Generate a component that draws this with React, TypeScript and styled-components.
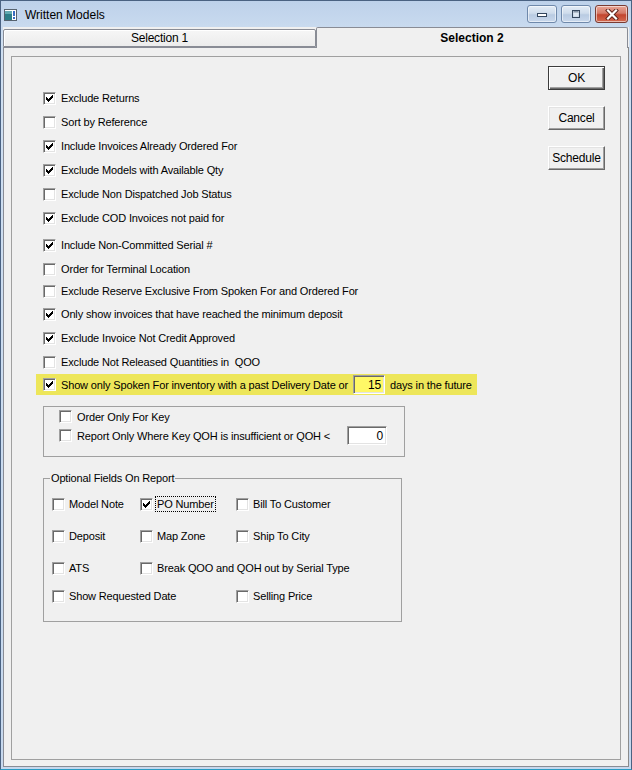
import React from "react";
import styled, { createGlobalStyle, css } from "styled-components";

const GlobalStyle = createGlobalStyle`
  html, body {
    margin: 0;
    padding: 0;
    background: #f0f0f0;
  }
  body {
    font-family: "Liberation Sans", Arial, sans-serif;
    font-size: 11px;
    letter-spacing: -0.15px;
    color: #000;
  }
`;

const WindowStyled = styled.div`
  box-sizing: border-box;
  width: 632px;
  height: 770px;
  display: flex;
  flex-direction: column;
  border: 1px solid #4a6282;
  border-bottom-color: #2a9cc4;
  padding: 0 2px 2px 2px;
  background: linear-gradient(#bdd1ea, #cfdff1 40px, #c6d8ee);
`;

const TitleBarStyled = styled.div`
  display: flex;
  align-items: flex-start;
  height: 26px;
  flex-shrink: 0;
`;

const TitleIconStyled = styled.div`
  display: flex;
  margin: 8px 0 0 1px;
`;

const TitleTextStyled = styled.div`
  font-size: 12px;
  letter-spacing: 0;
  line-height: 14px;
  margin: 7px 0 0 8px;
  color: #000;
`;

const CaptionButtonsStyled = styled.div`
  display: flex;
  gap: 4px;
  margin: 4px 1px 0 auto;
`;

const CaptionButtonStyled = styled.div<{ $close?: boolean }>`
  box-sizing: border-box;
  width: ${(p) => (p.$close ? 33 : 30)}px;
  height: 18px;
  display: flex;
  align-items: center;
  justify-content: center;
  border: 1px solid ${(p) => (p.$close ? "#7a3b32" : "#6f89ab")};
  border-radius: 3px;
  background: ${(p) =>
    p.$close
      ? "linear-gradient(#e9a596, #d47a68 45%, #c2452f 55%, #d46a50)"
      : "linear-gradient(#e3ecf6, #cfdcec 45%, #b9cbe2 55%, #c9d8ec)"};
  box-shadow: inset 0 0 0 1px rgba(255, 255, 255, 0.55);
`;

const ClientStyled = styled.div`
  flex: 1;
  display: flex;
  flex-direction: column;
  background: #f0f0f0;
  min-height: 0;
`;

const TabStripStyled = styled.div`
  display: flex;
  align-items: flex-end;
  height: 20px;
  flex-shrink: 0;
  position: relative;
  z-index: 1;
`;

const TabStyled = styled.div<{ $active?: boolean }>`
  box-sizing: border-box;
  display: flex;
  align-items: center;
  justify-content: center;
  border: 1px solid #898c95;
  border-radius: 2px 2px 0 0;
  ${(p) =>
    p.$active
      ? css`
          width: 312px;
          height: 21px;
          margin-bottom: -1px;
          border-bottom: none;
          background: #f0f0f0;
          font-weight: bold;
          font-size: 12px;
          letter-spacing: 0;
          padding-bottom: 1px;
        `
      : css`
          width: 313px;
          height: 18px;
          background: linear-gradient(#f6f6f6, #ececec);
          box-shadow: inset 1px 1px 0 #fff;
          font-size: 12px;
          letter-spacing: -0.2px;
        `}
`;

const TabPageStyled = styled.div`
  flex: 1;
  display: flex;
  box-sizing: border-box;
  border: 1px solid #898c95;
  border-right-color: #8a8a8a;
  padding: 8px 7px 6px 7px;
  min-height: 0;
`;

const FrameStyled = styled.div`
  flex: 1;
  display: flex;
  border: 1px solid #a0a0a0;
`;

const OptionsColumnStyled = styled.div`
  flex: 1;
  display: flex;
  flex-direction: column;
  align-items: flex-start;
  padding: 30px 0 0 31px;
`;

const ButtonsColumnStyled = styled.div`
  display: flex;
  flex-direction: column;
  gap: 16px;
  padding: 9px 15px 0 0;
`;

const ButtonStyled = styled.button<{ $default?: boolean }>`
  box-sizing: border-box;
  width: 57px;
  height: 24px;
  padding: 0;
  font: inherit;
  font-size: 12px;
  letter-spacing: -0.2px;
  color: #000;
  background: #f0f0f0;
  border: 1px solid;
  border-color: #fff #696969 #696969 #fff;
  box-shadow: inset -1px -1px 0 #a0a0a0, inset 1px 1px 0 #e3e3e3;
  ${(p) =>
    p.$default &&
    css`
      border-color: #3c3c3c;
      box-shadow: inset 1px 1px 0 #fff, inset -1px -1px 0 #696969,
        inset -2px -2px 0 #a0a0a0;
    `}
`;

const RowStyled = styled.div<{ $gap?: number }>`
  display: flex;
  align-items: center;
  gap: 5px;
  height: 22px;
  margin-top: ${(p) => p.$gap ?? 0}px;
  white-space: nowrap;
`;

const HighlightRowStyled = styled(RowStyled)`
  height: 21px;
  margin-left: -7px;
  padding: 0 5px 0 7px;
  background: #ede65a;
`;

const BoxStyled = styled.span`
  box-sizing: border-box;
  width: 13px;
  height: 13px;
  flex-shrink: 0;
  display: inline-flex;
  background: #fff;
  border: 1px solid;
  border-color: #a0a0a0 #fff #fff #a0a0a0;
  box-shadow: inset 1px 1px 0 #696969, inset -1px -1px 0 #e3e3e3;
  position: relative;
`;

const CheckMarkStyled = styled.svg`
  position: absolute;
  left: -1px;
  top: -1px;
`;

const LabelStyled = styled.span<{ $focused?: boolean }>`
  line-height: 14px;
  ${(p) =>
    p.$focused &&
    css`
      outline: 1px dotted #000;
      padding: 0 1px;
      margin-left: -1px;
    `}
`;

const NumberInputStyled = styled.div<{ $width: number; $bg?: string }>`
  box-sizing: border-box;
  width: ${(p) => p.$width}px;
  height: 19px;
  display: flex;
  align-items: center;
  justify-content: flex-end;
  padding-right: 3px;
  background: ${(p) => p.$bg ?? "#fff"};
  border: 1px solid;
  border-color: #a0a0a0 #fff #fff #a0a0a0;
  box-shadow: inset 1px 1px 0 #696969, inset -1px -1px 0 #e3e3e3;
  font-size: 12px;
`;

const KeyGroupStyled = styled.div`
  box-sizing: border-box;
  width: 362px;
  margin-top: 11px;
  padding: 0 17px 11px 15px;
  border: 1px solid #a0a0a0;
  display: flex;
  flex-direction: column;
`;

const KeyRowStyled = styled(RowStyled)`
  height: 19px;
`;

const PushRightStyled = styled.div`
  margin-left: auto;
`;

const FieldsetStyled = styled.fieldset`
  box-sizing: border-box;
  width: 359px;
  margin: 14px 0 0 0;
  padding: 0 8px 15px 8px;
  border: 1px solid #a0a0a0;
  min-width: 0;
`;

const LegendStyled = styled.legend`
  padding: 0 1px;
  margin-left: -2px;
  line-height: 14px;
`;

const FieldGridStyled = styled.div`
  display: grid;
  grid-template-columns: 88px 96px 1fr;
  grid-template-rows: 32px 32px 28px 20px;
  margin-top: 9px;
`;

const FieldCellStyled = styled(RowStyled)<{ $col: number; $span?: number }>`
  height: 20px;
  gap: 4px;
  grid-column: ${(p) => p.$col} / span ${(p) => p.$span ?? 1};
`;

const CheckMark = () => (
  <CheckMarkStyled width="13" height="13" viewBox="0 0 13 13" shapeRendering="crispEdges">
    <path
      fill="#000"
      d="M9 3h1v1h-1z M8 4h2v1h-2z M3 5h1v1h-1z M7 5h3v1h-3z M3 6h2v1h-2z M6 6h3v1h-3z M3 7h5v1h-5z M4 8h3v1h-3z M5 9h1v1h-1z"
    />
  </CheckMarkStyled>
);

const CheckBox: React.FC<{ checked?: boolean }> = ({ checked }) => (
  <BoxStyled>{checked && <CheckMark />}</BoxStyled>
);

interface IOption {
  label: string;
  checked: boolean;
  gap: number;
}

const mainOptions: IOption[] = [
  { label: "Exclude Returns", checked: true, gap: 0 },
  { label: "Sort by Reference", checked: false, gap: 2 },
  { label: "Include Invoices Already Ordered For", checked: true, gap: 2 },
  { label: "Exclude Models with Available Qty", checked: true, gap: 2 },
  { label: "Exclude Non Dispatched Job Status", checked: false, gap: 2 },
  { label: "Exclude COD Invoices not paid for", checked: true, gap: 2 },
  { label: "Include Non-Committed Serial #", checked: true, gap: 5 },
  { label: "Order for Terminal Location", checked: false, gap: 2 },
  { label: "Exclude Reserve Exclusive From Spoken For and Ordered For", checked: false, gap: 0 },
  { label: "Only show invoices that have reached the minimum deposit", checked: true, gap: 1 },
  { label: "Exclude Invoice Not Credit Approved", checked: true, gap: 2 },
  { label: "Exclude Not Released Quantities in\u00a0 QOO", checked: false, gap: 2 },
];

interface IField {
  label: string;
  checked?: boolean;
  focused?: boolean;
  col: number;
  span?: number;
}

const fields: IField[] = [
  { label: "Model Note", col: 1 },
  { label: "PO Number", col: 2, checked: true, focused: true },
  { label: "Bill To Customer", col: 3 },
  { label: "Deposit", col: 1 },
  { label: "Map Zone", col: 2 },
  { label: "Ship To City", col: 3 },
  { label: "ATS", col: 1 },
  { label: "Break QOO and QOH out by Serial Type", col: 2, span: 2 },
  { label: "Show Requested Date", col: 1, span: 2 },
  { label: "Selling Price", col: 3 },
];

const AppIcon = () => (
  <svg width="13" height="12" viewBox="0 0 13 12">
    <rect x="0.5" y="0.5" width="12" height="11" fill="#fff" stroke="#56626e" />
    <rect x="1" y="2" width="7" height="9" fill="#2b7d86" />
    <rect x="1" y="2" width="7" height="3" fill="#62a9b0" />
    <rect x="9" y="2" width="2" height="5" fill="#3a6cc0" />
    <rect x="9" y="8" width="2" height="2" fill="#3a6cc0" />
  </svg>
);

const MinIcon = () => (
  <svg width="12" height="8" viewBox="0 0 12 8">
    <rect x="1.5" y="3.5" width="9" height="3" fill="#fff" stroke="#34465e" />
  </svg>
);

const MaxIcon = () => (
  <svg width="12" height="10" viewBox="0 0 12 10">
    <rect x="2.5" y="1.5" width="7" height="7" fill="none" stroke="#34465e" />
    <rect x="3.5" y="2.5" width="5" height="1" fill="#34465e" />
    <rect x="3.5" y="3.5" width="5" height="4" fill="#dde7f3" />
  </svg>
);

const CloseIcon = () => (
  <svg width="14" height="11" viewBox="0 0 14 11">
    <path d="M3 1.5 L11 9.5 M11 1.5 L3 9.5" stroke="#5a2018" strokeWidth="4" strokeLinecap="square" />
    <path d="M3 1.5 L11 9.5 M11 1.5 L3 9.5" stroke="#fff" strokeWidth="2.2" strokeLinecap="square" />
  </svg>
);

export default function App() {
  return (
    <>
      <GlobalStyle />
      <WindowStyled>
        <TitleBarStyled>
          <TitleIconStyled>
            <AppIcon />
          </TitleIconStyled>
          <TitleTextStyled>Written Models</TitleTextStyled>
          <CaptionButtonsStyled>
            <CaptionButtonStyled>
              <MinIcon />
            </CaptionButtonStyled>
            <CaptionButtonStyled>
              <MaxIcon />
            </CaptionButtonStyled>
            <CaptionButtonStyled $close>
              <CloseIcon />
            </CaptionButtonStyled>
          </CaptionButtonsStyled>
        </TitleBarStyled>
        <ClientStyled>
          <TabStripStyled>
            <TabStyled>Selection 1</TabStyled>
            <TabStyled $active>Selection 2</TabStyled>
          </TabStripStyled>
          <TabPageStyled>
            <FrameStyled>
              <OptionsColumnStyled>
                {mainOptions.map(({ label, checked, gap }) => (
                  <RowStyled key={label} $gap={gap}>
                    <CheckBox checked={checked} />
                    <LabelStyled>{label}</LabelStyled>
                  </RowStyled>
                ))}
                <HighlightRowStyled $gap={1}>
                  <CheckBox checked />
                  <LabelStyled>Show only Spoken For inventory with a past Delivery Date or</LabelStyled>
                  <NumberInputStyled $width={32} $bg="#fff866">
                    15
                  </NumberInputStyled>
                  <LabelStyled>days in the future</LabelStyled>
                </HighlightRowStyled>

                <KeyGroupStyled>
                  <KeyRowStyled>
                    <CheckBox />
                    <LabelStyled>Order Only For Key</LabelStyled>
                  </KeyRowStyled>
                  <KeyRowStyled>
                    <CheckBox />
                    <LabelStyled>Report Only Where Key QOH is insufficient or QOH &lt;</LabelStyled>
                    <PushRightStyled>
                      <NumberInputStyled $width={40}>0</NumberInputStyled>
                    </PushRightStyled>
                  </KeyRowStyled>
                </KeyGroupStyled>

                <FieldsetStyled>
                  <LegendStyled>Optional Fields On Report</LegendStyled>
                  <FieldGridStyled>
                    {fields.map(({ label, checked, focused, col, span }) => (
                      <FieldCellStyled key={label} $col={col} $span={span}>
                        <CheckBox checked={checked} />
                        <LabelStyled $focused={focused}>{label}</LabelStyled>
                      </FieldCellStyled>
                    ))}
                  </FieldGridStyled>
                </FieldsetStyled>
              </OptionsColumnStyled>
              <ButtonsColumnStyled>
                <ButtonStyled $default>OK</ButtonStyled>
                <ButtonStyled>Cancel</ButtonStyled>
                <ButtonStyled>Schedule</ButtonStyled>
              </ButtonsColumnStyled>
            </FrameStyled>
          </TabPageStyled>
        </ClientStyled>
      </WindowStyled>
    </>
  );
}
